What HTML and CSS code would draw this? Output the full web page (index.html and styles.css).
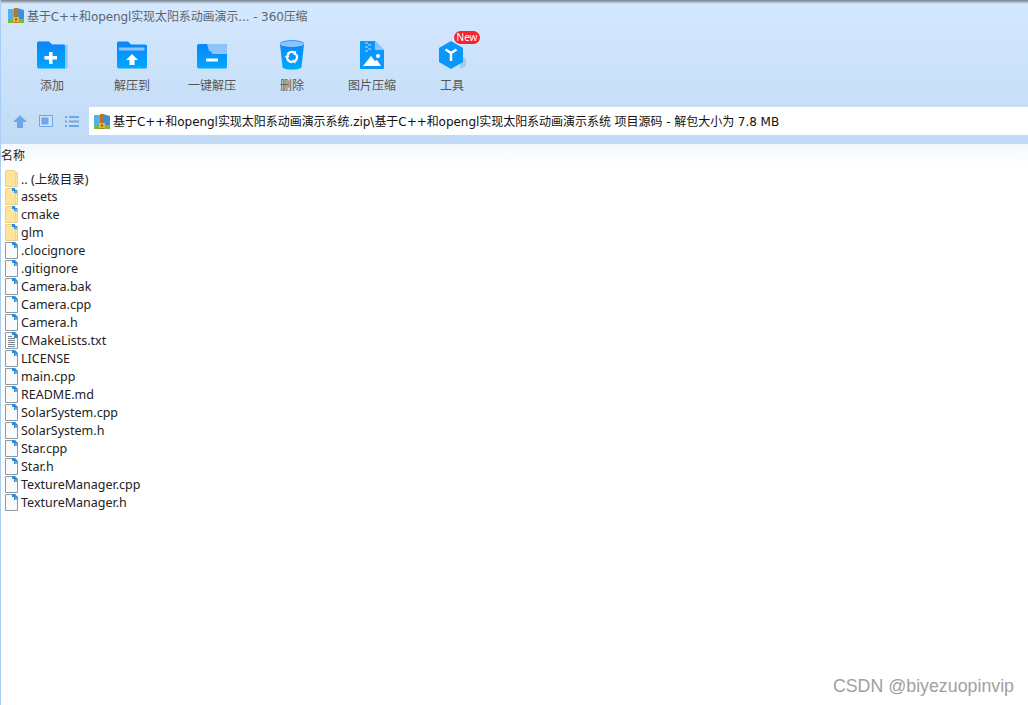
FILE: index.html
```html
<!doctype html>
<html lang="en">
  <head>
    <meta charset="UTF-8" />
    <title>360压缩</title>
    <link rel="stylesheet" href="styles.css">
  </head>
  <body>
    <svg class="defs" width="0" height="0">
      <defs>
        <linearGradient id="blue" x1="0" y1="0" x2="0" y2="1">
          <stop offset="0" stop-color="#0a84fb" />
          <stop offset="1" stop-color="#00a8ff" />
        </linearGradient>
        <symbol id="zip" viewBox="0 0 16 15">
          <path d="M0 1h6l1 1h2v9H0z" fill="#5aaee8" />
          <path d="M9 0l7 2v9H9z" fill="#3f8fd6" />
          <path d="M0 11h16v4H0z" fill="#7cb93a" />
          <path d="M6 0h4v15H6z" fill="#b9762a" />
          <path d="M5 9h6v5H5z" fill="#f0b429" />
          <path d="M7 10.500h2v2H7z" fill="#8a5a1c" />
        </symbol>
        <symbol id="folder" viewBox="0 0 13 17">
          <path d="M.5.500h9l1 1v1h2v14H.5z" fill="#fee59c" stroke="#e8d08e" />
          <path d="M10.500 2v14" stroke="#f4d683" />
        </symbol>
        <symbol id="badge" viewBox="0 0 13 17">
          <path d="M7 0h3v2h2v3H9V3H7z" fill="#2f8ad8" />
          <path d="M10 3h2.500v2.500H10z" fill="#6cb4ec" />
        </symbol>
        <symbol id="file" viewBox="0 0 13 17">
          <path d="M.5.500h8l4 4v12H.5z" fill="#f8fafb" stroke="#8f98a3" />
          <path d="M7 0h3l3 3v3H9V3H7z" fill="#2f8ad8" />
          <path d="M10 3.500h2.500V6H10z" fill="#6cb4ec" />
        </symbol>
        <symbol id="text" viewBox="0 0 13 17">
          <path d="M.5.500h8l4 4v12H.5z" fill="#f8fafb" stroke="#8f98a3" />
          <path d="M7 0h3l3 3v3H9V3H7z" fill="#2f8ad8" />
          <path d="M3 4.500h4M3 6.500h7M3 8.500h7M3 10.500h7M3 12.500h7M3 14.500h7" stroke="#7d858e" />
        </symbol>
        <g id="recycle-arm">
          <path d="M8.670 14.500A5 5 0 0 1 15.500 12.670" fill="none" stroke="#fff" stroke-width="2.500" />
          <path d="M14.250 14.830L16.750 10.500 17.700 15.290z" fill="#fff" />
        </g>
      </defs>
    </svg>

    <header class="top">
      <div class="title">
        <svg class="zip-icon" width="16" height="15"><use href="#zip" /></svg>
        <span>基于C++和opengl实现太阳系动画演示... - 360压缩</span>
      </div>

      <div class="toolbar">
        <div class="tool">
          <svg width="32" height="30" viewBox="0 0 32 30">
            <path d="M1 3a1.500 1.500 0 0 1 1.500-1.500H13l3 3h14a1.500 1.500 0 0 1 1.500 1.500v21a1.500 1.500 0 0 1-1.500 1.500H3a2 2 0 0 1-2-2z" fill="#8cc4fb" />
            <path d="M1 3a1.500 1.500 0 0 1 1.500-1.500H13l3 3h11a2 2 0 0 1 2 2V28.500H3a2 2 0 0 1-2-2z" fill="url(#blue)" />
            <path d="M13 12h3.500v4H21v3.500h-4.500V24H13v-4.500H8.500V16H13z" fill="#fff" />
          </svg>
          <span>添加</span>
        </div>
        <div class="tool">
          <svg width="32" height="30" viewBox="0 0 32 30">
            <path d="M1 3a1.500 1.500 0 0 1 1.500-1.500H12l3 3h14.500A1.500 1.500 0 0 1 31 6v21a1.500 1.500 0 0 1-1.500 1.500H3a2 2 0 0 1-2-2z" fill="url(#blue)" />
            <path d="M3 7.500h25.500v3H3z" fill="#8cc4fb" />
            <path d="M16 14l6 6h-3.500v5h-5v-5H10z" fill="#fff" />
          </svg>
          <span>解压到</span>
        </div>
        <div class="tool">
          <svg width="32" height="30" viewBox="0 0 32 30">
            <path d="M1 6a2 2 0 0 1 2-2h26a2 2 0 0 1 2 2v21a1.500 1.500 0 0 1-1.500 1.500H3a2 2 0 0 1-2-2z" fill="url(#blue)" />
            <path d="M11 4h18a2 2 0 0 1 2 2v8H17l-3-3h-1z" fill="#8cc4fb" />
            <path d="M10 18.500h12v3H10z" fill="#fff" />
          </svg>
          <span>一键解压</span>
        </div>
        <div class="tool">
          <svg width="26" height="30" viewBox="0 0 26 30">
            <path d="M1 4c0-5 24-5 24 0l-2.500 23c-.5 3.500-18.500 3.500-19 0z" fill="url(#blue)" />
            <ellipse cx="13" cy="4" rx="12" ry="3" fill="#8cc4fb" />
            <use href="#recycle-arm" />
            <use href="#recycle-arm" transform="rotate(120 13 17)" />
            <use href="#recycle-arm" transform="rotate(240 13 17)" />
          </svg>
          <span>删除</span>
        </div>
        <div class="tool">
          <svg width="26" height="30" viewBox="0 0 26 30">
            <path d="M2 1h14l9 9v18a1 1 0 0 1-1 1H2a1 1 0 0 1-1-1V2a1 1 0 0 1 1-1z" fill="#0a96fb" />
            <path d="M16 1l9 9h-8a1 1 0 0 1-1-1z" fill="#8cc4fb" />
            <path d="M6 2h3v2H6zM9 4h3v2H9zM6 6h3v2H6zM9 8h3v2H9zM6 10h3v2H6z" fill="#6ab8fb" />
            <circle cx="19" cy="16" r="2" fill="#fff" />
            <path d="M4 26l8-10 4 5 2-1 4 6z" fill="#fff" />
          </svg>
          <span>图片压缩</span>
        </div>
        <div class="tool">
          <svg class="cube" width="30" height="30" viewBox="0 0 30 30">
            <path d="M22 16l6 3v7l-6 3z" fill="#9ccbfb" />
            <path d="M13 1l12 7v14l-12 7-12-7V8z" fill="#0a96fb" />
            <path d="M7.500 9.500L13 13l5.500-3.500M13 13v8" fill="none" stroke="#fff" stroke-width="2.500" />
          </svg>
          <span>工具</span>
          <b class="badge">New</b>
        </div>
      </div>

      <div class="pathrow">
        <div class="nav">
          <svg width="14" height="13" viewBox="0 0 14 13"><path d="M7 0l7 7h-4v6H4V7H0z" fill="#6ea6ea" /></svg>
          <svg width="14" height="12" viewBox="0 0 14 12"><path d="M.5.500h13v11H.5z" fill="#cfe2f8" stroke="#6ea6ea" /><path d="M2.500 2.500h7v7h-7z" fill="#6ea6ea" /></svg>
          <svg width="14" height="11" viewBox="0 0 14 11"><path d="M0 0h2v2H0zM4 0h10v2H4zM0 4.500h2v2H0zM4 4.500h10v2H4zM0 9h2v2H0zM4 9h10v2H4z" fill="#6ea6ea" /></svg>
        </div>
        <div class="path">
          <svg class="zip-icon" width="16" height="15"><use href="#zip" /></svg>
          <span>基于C++和opengl实现太阳系动画演示系统.zip\基于C++和opengl实现太阳系动画演示系统 项目源码 - 解包大小为 7.8 MB</span>
        </div>
      </div>
    </header>

    <main class="list">
      <div class="colhead">名称</div>
      <ul class="files">
        <li><svg width="13" height="17"><use href="#folder" /></svg>.. (上级目录)</li>
        <li><svg width="13" height="17"><use href="#folder" /><use href="#badge" /></svg>assets</li>
        <li><svg width="13" height="17"><use href="#folder" /><use href="#badge" /></svg>cmake</li>
        <li><svg width="13" height="17"><use href="#folder" /><use href="#badge" /></svg>glm</li>
        <li><svg width="13" height="17"><use href="#file" /></svg>.clocignore</li>
        <li><svg width="13" height="17"><use href="#file" /></svg>.gitignore</li>
        <li><svg width="13" height="17"><use href="#file" /></svg>Camera.bak</li>
        <li><svg width="13" height="17"><use href="#file" /></svg>Camera.cpp</li>
        <li><svg width="13" height="17"><use href="#file" /></svg>Camera.h</li>
        <li><svg width="13" height="17"><use href="#text" /></svg>CMakeLists.txt</li>
        <li><svg width="13" height="17"><use href="#file" /></svg>LICENSE</li>
        <li><svg width="13" height="17"><use href="#file" /></svg>main.cpp</li>
        <li><svg width="13" height="17"><use href="#file" /></svg>README.md</li>
        <li><svg width="13" height="17"><use href="#file" /></svg>SolarSystem.cpp</li>
        <li><svg width="13" height="17"><use href="#file" /></svg>SolarSystem.h</li>
        <li><svg width="13" height="17"><use href="#file" /></svg>Star.cpp</li>
        <li><svg width="13" height="17"><use href="#file" /></svg>Star.h</li>
        <li><svg width="13" height="17"><use href="#file" /></svg>TextureManager.cpp</li>
        <li><svg width="13" height="17"><use href="#file" /></svg>TextureManager.h</li>
      </ul>
    </main>

    <div class="watermark">CSDN @biyezuopinvip</div>
  </body>
</html>
```

FILE: styles.css
```css
html,
body {
  margin: 0;
  padding: 0;
  height: 705px;
  overflow: hidden;
}
body {
  position: relative;
  background: #fff;
  border-left: 1px solid #a9cdf3;
  box-sizing: border-box;
  font-family: "Noto Sans", "Noto Sans CJK SC", sans-serif;
  font-size: 12px;
  color: #222;
}
.defs {
  position: absolute;
}
.top {
  height: 144px;
  margin-left: -1px;
  box-sizing: border-box;
  padding-top: 2px;
  background: linear-gradient(#77828e, #a9b6c4 2px, #d4e8fe 4px, #c1dbf6);
}
.title {
  display: flex;
  align-items: center;
  height: 27px;
  padding: 0 0 0 8px;
  color: #5a6570;
  font-family: "DejaVu Sans", "Noto Sans CJK SC", sans-serif;
  font-size: 12px;
  letter-spacing: -0.1px;
}
.zip-icon {
  flex: none;
  margin-right: 3px;
}
.toolbar {
  display: flex;
  padding-left: 12px;
  height: 78px;
}
.tool {
  position: relative;
  width: 80px;
  display: flex;
  flex-direction: column;
  align-items: center;
  padding-top: 11px;
  box-sizing: border-box;
  color: #555;
}
.tool svg {
  height: 30px;
  margin-bottom: 6px;
}
.tool .cube {
  margin-left: 2px;
}
.badge {
  position: absolute;
  left: 42px;
  top: 2px;
  width: 26px;
  height: 13px;
  border-radius: 7px;
  background: #f5242f;
  color: #fff;
  font-size: 10px;
  font-weight: 400;
  line-height: 13px;
  text-align: center;
}
.pathrow {
  display: flex;
  height: 28px;
}
.nav {
  display: flex;
  align-items: center;
  gap: 12px;
  width: 89px;
  padding-left: 13px;
  box-sizing: border-box;
}
.path {
  flex: 1;
  display: flex;
  align-items: center;
  background: #fff;
  padding-left: 5px;
  color: #111;
  font-family: "DejaVu Sans", "Noto Sans CJK SC", sans-serif;
  font-size: 12px;
  letter-spacing: -0.04px;
  white-space: nowrap;
}
.path span {
  margin-top: -2px;
}
.list {
  height: 561px;
}
.colhead {
  height: 25px;
  line-height: 23px;
  background: linear-gradient(#f3f8fe, #fff);
  color: #222;
}
.files {
  list-style: none;
  margin: 0;
  padding: 0 0 0 4px;
}
.files li {
  display: flex;
  align-items: center;
  gap: 3px;
  height: 18px;
  font-size: 12.500px;
  white-space: nowrap;
}
.files svg {
  flex: none;
}
.watermark {
  position: absolute;
  right: 14px;
  top: 676px;
  font-family: "Liberation Sans", sans-serif;
  font-size: 17.800px;
  color: #a0a0a0;
}
```
